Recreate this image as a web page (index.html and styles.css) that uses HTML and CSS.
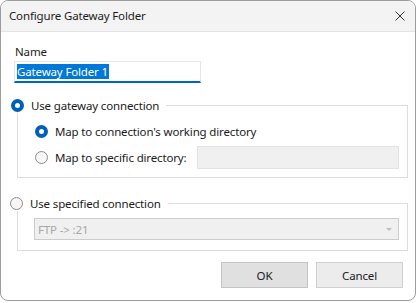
FILE: index.html
```html
<!DOCTYPE html>
<html lang="en">
  <head>
    <meta charset="UTF-8" />
    <title>Configure Gateway Folder</title>
    <link rel="stylesheet" href="styles.css">
  </head>

  <body>
    <div class="dialog">
      <div class="titlebar">
        <span class="title">Configure Gateway Folder</span>
        <svg class="close" width="10" height="10" viewBox="0 0 10 10">
          <path d="M0.5 0.5 L9.5 9.5 M9.5 0.5 L0.5 9.5" stroke="#333" stroke-width="1" fill="none" />
        </svg>
      </div>

      <div class="content">
        <div class="label">Name</div>
        <div class="textbox">
          <span class="selected">Gateway Folder 1</span>
        </div>

        <fieldset class="group group-gateway">
          <legend>
            <span class="radio checked"></span>
            <span>Use gateway connection</span>
          </legend>
          <div class="row">
            <span class="radio checked"></span>
            <span>Map to connection's working directory</span>
          </div>
          <div class="row">
            <span class="radio"></span>
            <span>Map to specific directory:</span>
            <div class="dir-box"></div>
          </div>
        </fieldset>

        <fieldset class="group group-specified">
          <legend>
            <span class="radio"></span>
            <span>Use specified connection</span>
          </legend>
          <div class="combo">
            <span>FTP -&gt; :21</span>
            <span class="arrow"></span>
          </div>
        </fieldset>

        <div class="buttons">
          <div class="btn btn-default">OK</div>
          <div class="btn">Cancel</div>
        </div>
      </div>
    </div>
  </body>
</html>
```

FILE: styles.css
```css
body {
  margin: 0;
  background: #fff;
  font-family: "Noto Sans", "Open Sans", sans-serif;
  font-size: 11.5px;
  letter-spacing: -0.15px;
  color: #1a1a1a;
  white-space: nowrap;
}

div {
  box-sizing: border-box;
}

.dialog {
  width: 416px;
  height: 301px;
  border: 1px solid #9c9c9c;
  border-radius: 8px;
  overflow: hidden;
  background: #fff;
  display: flex;
  flex-direction: column;
}

.titlebar {
  height: 31px;
  flex: none;
  background: #f3f3f3;
  border-bottom: 1px solid #e3e3e3;
  display: flex;
  align-items: center;
  justify-content: space-between;
  padding: 0 10px 0 8px;
}

.title {
  color: #1c1c1c;
  line-height: 16px;
}

.content {
  padding: 0 12px 0 13px;
  display: flex;
  flex-direction: column;
}

.label {
  margin-top: 12px;
  padding-left: 1px;
  line-height: 16px;
}

.textbox {
  margin-top: 1px;
  width: 187px;
  height: 22px;
  border: 1px solid #e5e5e5;
  border-bottom: 2px solid #0067c0;
  padding-left: 2px;
  display: flex;
  align-items: center;
}

.selected {
  background: #0078d7;
  color: #fff;
  line-height: 15px;
  padding: 0 1px 0 0;
}

.group {
  margin: 0 0 0 3px;
  padding: 0 8px 0 17px;
  width: 391px;
  box-sizing: border-box;
  border: 1px solid #dcdcdc;
  min-width: 0;
}

.group legend {
  margin-left: -24px;
  padding: 0 7px 0 0;
  height: 16px;
  display: flex;
  align-items: center;
  gap: 7px;
  background: #fff;
}

.group-gateway {
  margin-top: 14px;
  padding-top: 5px;
  padding-bottom: 7px;
}

.group-specified {
  margin-top: 17px;
  padding-left: 16px;
  padding-bottom: 10px;
}

.row {
  height: 26px;
  display: flex;
  align-items: center;
  gap: 7px;
}

.radio {
  width: 13px;
  height: 13px;
  box-sizing: border-box;
  border-radius: 50%;
  border: 1px solid #8b8b8b;
  background: #f6f6f6;
  flex: none;
  display: inline-block;
}

.radio.checked {
  border: 4px solid #005fb8;
  background: #fff;
}

.dir-box {
  margin-left: auto;
  flex: none;
  width: 202px;
  height: 23px;
  background: #f0f0f0;
  border: 1px solid #e2e2e2;
}

.combo {
  margin-top: 7px;
  width: 365px;
  height: 22px;
  background: #f0f0f0;
  border: 1px solid #cccccc;
  color: #a6a6a6;
  display: flex;
  align-items: center;
  justify-content: space-between;
  padding: 0 6px 0 3px;
}

.arrow {
  width: 0;
  height: 0;
  border-left: 3px solid transparent;
  border-right: 3px solid transparent;
  border-top: 3px solid #bdbdbd;
}

.buttons {
  margin-top: 11px;
  display: flex;
  justify-content: flex-end;
  gap: 8px;
}

.btn {
  width: 87px;
  height: 26px;
  border: 1px solid #d0d0d0;
  background: #ececec;
  display: flex;
  align-items: center;
  justify-content: center;
  color: #1a1a1a;
}

.btn-default {
  background: #e0e0e0;
  border-color: #c4c4c4;
}
```
